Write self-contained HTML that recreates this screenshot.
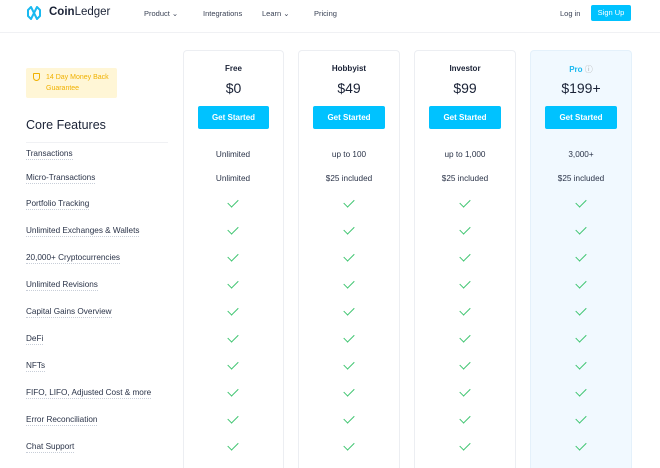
<!DOCTYPE html><html><head><style>
*{margin:0;padding:0;box-sizing:border-box}
html,body{width:660px;height:468px;overflow:hidden}
body{background:#fff;font-family:"Liberation Sans",sans-serif;color:#1a2236;position:relative}
.a{position:absolute}
.nav{font-size:7.5px;color:#3a4255}
.card{position:absolute;top:50px;height:418px;border:1px solid #eceef2;border-bottom:none;border-radius:4px 4px 0 0;background:#fff}
.h{position:absolute;width:100%;text-align:center;font-size:8px;font-weight:bold;top:13px}
.p{position:absolute;width:100%;text-align:center;font-size:14px;top:29px}
.b{position:absolute;left:14px;right:14px;top:55px;height:23px;background:#00c2ff;border-radius:2px;color:#fff;font-size:8px;font-weight:bold;text-align:center;line-height:23px}
.lab{position:absolute;left:26px;font-size:8.2px;color:#2a3348;border-bottom:1px dotted #c8ced8;line-height:10px}
.v{position:absolute;width:100px;text-align:center;font-size:8.2px;color:#2a3348}
.ck{position:absolute;width:10px;height:6px;border-left:1px solid #3cc46e;border-bottom:1px solid #3cc46e;transform:rotate(-45deg)}
</style></head><body>
<svg class="a" style="left:26px;top:5px" width="16" height="16" viewBox="0 0 16 16"><path d="M5 2 L2 5 L2 11 L5 14 M11 2 L14 5 L14 11 L11 14 M5 2 L11 14 M11 2 L5 14" stroke="#19b9f0" stroke-width="2" fill="none" stroke-linecap="round"/></svg>
<div class="a" style="left:49px;top:6px;font-size:11.5px;color:#1a2236"><b>Coin</b>Ledger</div>
<div class="a nav" style="left:144px;top:9px">Product ⌄</div>
<div class="a nav" style="left:203px;top:9px">Integrations</div>
<div class="a nav" style="left:262px;top:9px">Learn ⌄</div>
<div class="a nav" style="left:314px;top:9px">Pricing</div>
<div class="a nav" style="left:560px;top:9px">Log in</div>
<div class="a" style="left:591px;top:5px;width:40px;height:16px;background:#00c2ff;border-radius:2px;color:#fff;font-size:7.5px;text-align:center;line-height:16px">Sign Up</div>
<div class="a" style="left:0;top:32px;width:660px;height:1px;background:#f0f1f4"></div>
<div class="a" style="left:26px;top:68px;width:91px;height:30px;background:#fff6d6;border-radius:2px;color:#f0b100;font-size:7px;line-height:11px;padding:4px 0 0 20px">14 Day Money Back Guarantee</div>
<div class="a" style="left:33px;top:73px;width:7px;height:8px;border:1px solid #f0b100;border-radius:1px 1px 4px 4px"></div>
<div class="a" style="left:26px;top:118px;font-size:12.5px">Core Features</div>
<div class="a" style="left:26px;top:142px;width:142px;height:1px;background:#f0f1f4"></div>
<div class="card" style="left:183px;width:101px"><div class="h">Free</div><div class="p">$0</div><div class="b">Get Started</div></div>
<div class="card" style="left:298px;width:102px"><div class="h">Hobbyist</div><div class="p">$49</div><div class="b">Get Started</div></div>
<div class="card" style="left:414px;width:102px"><div class="h">Investor</div><div class="p">$99</div><div class="b">Get Started</div></div>
<div class="card" style="left:530px;width:102px;background:#f1f9ff;border-color:#e4f1fb"><div class="h" style="color:#19b9f0">Pro <span style="color:#aaa;font-weight:normal">ⓘ</span></div><div class="p">$199+</div><div class="b">Get Started</div></div>
<div class="lab" style="top:149px">Transactions</div>
<div class="lab" style="top:173px">Micro-Transactions</div>
<div class="lab" style="top:199px">Portfolio Tracking</div>
<div class="lab" style="top:226px">Unlimited Exchanges &amp; Wallets</div>
<div class="lab" style="top:253px">20,000+ Cryptocurrencies</div>
<div class="lab" style="top:280px">Unlimited Revisions</div>
<div class="lab" style="top:307px">Capital Gains Overview</div>
<div class="lab" style="top:334px">DeFi</div>
<div class="lab" style="top:361px">NFTs</div>
<div class="lab" style="top:388px">FIFO, LIFO, Adjusted Cost &amp; more</div>
<div class="lab" style="top:415px">Error Reconciliation</div>
<div class="lab" style="top:442px">Chat Support</div>
<div class="v" style="left:183px;top:150px">Unlimited</div>
<div class="v" style="left:299px;top:150px">up to 100</div>
<div class="v" style="left:415px;top:150px">up to 1,000</div>
<div class="v" style="left:531px;top:150px">3,000+</div>
<div class="v" style="left:183px;top:174px">Unlimited</div>
<div class="v" style="left:299px;top:174px">$25 included</div>
<div class="v" style="left:415px;top:174px">$25 included</div>
<div class="v" style="left:531px;top:174px">$25 included</div>
<div id="c"></div>
<script>
var ys=[204,231,258,285,312,339,366,393,420,447],xs=[233,349,465,581],h='';
ys.forEach(function(y){xs.forEach(function(x){h+='<div class="ck" style="left:'+(x-5)+'px;top:'+(y-5)+'px"></div>'})});
document.getElementById('c').innerHTML=h;
</script>
</body></html>
